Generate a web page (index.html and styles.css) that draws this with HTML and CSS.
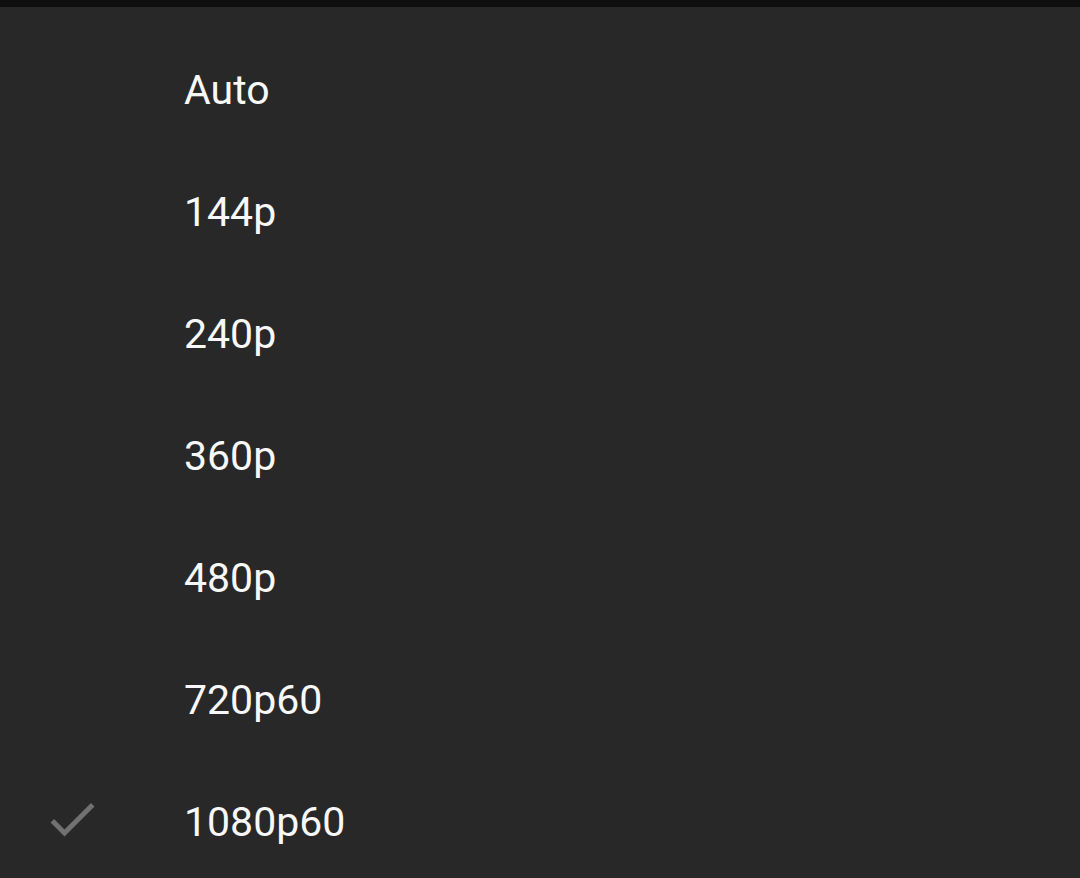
FILE: index.html
```html
<!DOCTYPE html>
<html>
<head>
<meta charset="utf-8">
<link rel="stylesheet" href="styles.css">
</head>
<body>
<div class="topbar"></div>
<ul class="menu">
  <li class="item"><span class="check"></span><span class="label">Auto</span></li>
  <li class="item"><span class="check"></span><span class="label">144p</span></li>
  <li class="item"><span class="check"></span><span class="label">240p</span></li>
  <li class="item"><span class="check"></span><span class="label">360p</span></li>
  <li class="item"><span class="check"></span><span class="label">480p</span></li>
  <li class="item"><span class="check"></span><span class="label">720p60</span></li>
  <li class="item selected"><span class="check"><svg viewBox="0 0 24 24" width="60" height="60"><path d="M9 16.17L4.83 12l-1.42 1.41L9 19 21 7l-1.41-1.41z" fill="#717171"/></svg></span><span class="label">1080p60</span></li>
</ul>
</body>
</html>
```
FILE: styles.css
```css
html, body {
  margin: 0;
  padding: 0;
  background: #282828;
  height: 100%;
  overflow: hidden;
}
body {
  font-family: Roboto, "Noto Sans", sans-serif;
  color: #ffffff;
}
.topbar {
  height: 7px;
  background: #0f0f0f;
}
.menu {
  list-style: none;
  margin: 0;
  padding: 23px 0 0 0;
}
.item {
  height: 122px;
  display: flex;
  align-items: center;
}
.check {
  width: 60px;
  height: 60px;
  margin-left: 42px;
  margin-right: 82px;
  display: flex;
  margin-top: -8px;
}
.label {
  font-size: 41px;
  line-height: 1.17;
  color: #f8f8f8;
}
```
